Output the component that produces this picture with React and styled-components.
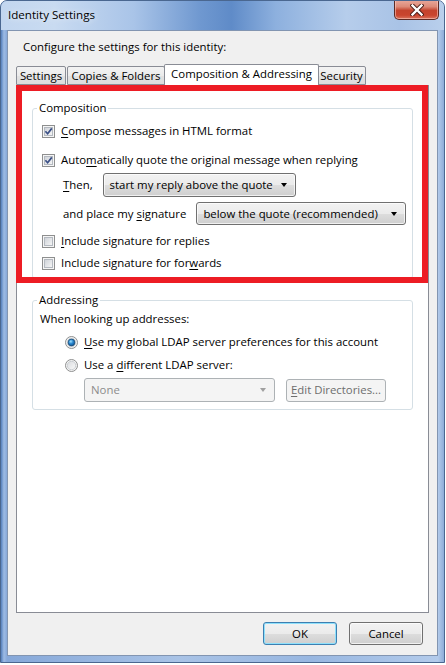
import React from 'react';
import styled, { createGlobalStyle } from 'styled-components';

const Global = createGlobalStyle`
  html, body { margin: 0; padding: 0; background: #ffffff; }
  body {
    font-family: "Open Sans", "Noto Sans", sans-serif;
    font-size: 11.4px;
    color: #000;
  }
  * { box-sizing: border-box; }
`;

const Window = styled.div`
  width: 445px;
  height: 663px;
  border: 1px solid #4a6790;
  border-radius: 7px 7px 0 0;
  background: linear-gradient(90deg, #5580bd 0px, #9dbbe4 3px, #86a8d9 6px, #a9c3e6 40%, #98b7e1 70%, #b3cbeb calc(100% - 6px), #8eacd8 100%);
  display: flex;
  flex-direction: column;
  padding: 0 6px 6px 6px;
  overflow: hidden;
`;

const TitleBar = styled.div`
  height: 29px;
  margin: 0 -6px;
  padding: 0 5px 0 7px;
  display: flex;
  justify-content: space-between;
  align-items: flex-start;
  background: linear-gradient(90deg, #c2d6ef 0%, #c9dbf1 12%, #a9c4e8 30%, #6f98d0 45%, #5f8bc8 52%, #8db0de 62%, #b6cdeb 78%, #a9c3e6 90%, #b9cfec 100%);
`;

const Title = styled.div`
  margin-top: 6px;
  line-height: 16px;
  font-size: 11.6px;
  color: #000;
  text-shadow: 0 0 6px rgba(255,255,255,0.9);
`;

const CloseButton = styled.div`
  width: 45px;
  height: 20px;
  margin-top: -1px;
  border: 1px solid #5c2a24;
  border-top: none;
  border-radius: 0 0 5px 5px;
  background: linear-gradient(180deg, #e9a99c 0%, #dd8a78 35%, #c4432d 55%, #c9452e 80%, #d9735d 100%);
  box-shadow: inset 0 0 0 1px rgba(255,210,200,0.55);
  display: flex;
  align-items: center;
  justify-content: center;
`;

const Client = styled.div`
  flex: 1;
  border: 1px solid #8295b1;
  background: #f0f0f0;
  display: flex;
  flex-direction: column;
  padding: 8px 8px 10px 8px;
`;

const Intro = styled.div`
  line-height: 16px;
  padding-left: 7px;
`;

const TabStrip = styled.div`
  margin-top: 9px;
  height: 21px;
  display: flex;
  align-items: flex-end;
  position: relative;
  z-index: 1;
`;

const Tab = styled.div`
  width: ${p => p.$w}px;
  height: ${p => (p.$active ? 22 : 19)}px;
  margin-left: ${p => (p.$active ? -2 : 0)}px;
  margin-right: ${p => (p.$active ? -2 : 1)}px;
  margin-bottom: ${p => (p.$active ? -1 : 0)}px;
  border: 1px solid #898c95;
  border-bottom: ${p => (p.$active ? 'none' : '1px solid #898c95')};
  border-radius: 2px 2px 0 0;
  background: ${p => (p.$active ? '#ffffff' : 'linear-gradient(180deg, #f3f3f3 0%, #ebebeb 50%, #e2e2e2 51%, #dcdcdc 100%)')};
  display: flex;
  justify-content: center;
  padding-top: 1px;
  line-height: 16px;
  white-space: nowrap;
  position: relative;
  z-index: ${p => (p.$active ? 2 : 1)};
`;

const Panel = styled.div`
  flex: 1;
  border: 1px solid #898c95;
  background: #ffffff;
  position: relative;
  padding: 0 15px;
  display: flex;
  flex-direction: column;
`;

const Highlight = styled.div`
  position: absolute;
  left: -1px;
  top: -1px;
  width: 412px;
  height: 198px;
  border: 6px solid #ed1c24;
  pointer-events: none;
  z-index: 3;
`;

const Group = styled.fieldset`
  margin: ${p => p.$top}px 0 0 0;
  padding: 0 8px 7px 7px;
  border: 1px solid #d5dfe5;
  border-radius: 3px;
  min-width: 0;
  display: flex;
  flex-direction: column;
`;

const Legend = styled.legend`
  padding: 0 2px;
  margin-left: -3px;
  line-height: 16px;
`;

const Line = styled.div`
  display: flex;
  align-items: center;
  height: ${p => p.$h || 16}px;
  margin-top: ${p => p.$mt || 0}px;
  margin-left: ${p => p.$ml || 0}px;
  gap: ${p => p.$gap || 6}px;
  white-space: nowrap;
  line-height: 16px;
`;

const Key = styled.span`
  text-decoration: underline;
  text-underline-offset: 2px;
`;

const Icon13 = styled.svg`
  width: 13px;
  height: 13px;
  flex: none;
  display: block;
`;

const Select = styled.div`
  width: ${p => p.$w}px;
  height: ${p => p.$h || 24}px;
  border: 1px solid ${p => (p.$disabled ? '#adb2b5' : '#707070')};
  border-radius: 3px;
  background: ${p => (p.$disabled ? '#f4f4f4' : 'linear-gradient(180deg, #f2f2f2 0%, #ebebeb 50%, #dddddd 51%, #cfcfcf 100%)')};
  box-shadow: ${p => (p.$disabled ? 'none' : 'inset 0 0 0 1px rgba(255,255,255,0.7)')};
  color: ${p => (p.$disabled ? '#8c8c8c' : '#000')};
  display: flex;
  align-items: center;
  justify-content: space-between;
  padding: 0 8px 0 6px;
  flex: none;
`;

const Arrow = styled.span`
  width: 0;
  height: 0;
  border-left: 3.5px solid transparent;
  border-right: 3.5px solid transparent;
  border-top: 4px solid ${p => (p.$disabled ? '#a0a0a0' : '#000')};
`;

const Button = styled.div`
  width: ${p => p.$w}px;
  height: 23px;
  border: 1px solid ${p => (p.$default ? '#3c7fb1' : p.$disabled ? '#adb2b5' : '#707070')};
  border-radius: 3px;
  background: ${p => (p.$disabled ? '#f4f4f4' : 'linear-gradient(180deg, #f2f2f2 0%, #ebebeb 50%, #dddddd 51%, #cfcfcf 100%)')};
  box-shadow: ${p => (p.$default ? 'inset 0 0 0 1px #8ee0fb' : p.$disabled ? 'none' : 'inset 0 0 0 1px rgba(255,255,255,0.7)')};
  color: ${p => (p.$disabled ? '#6d6d6d' : '#000')};
  display: flex;
  align-items: center;
  justify-content: center;
  line-height: 16px;
  flex: none;
`;

const ButtonRow = styled.div`
  margin-top: 9px;
  display: flex;
  justify-content: flex-end;
  gap: 12px;
  padding-right: 6px;
`;

const CheckBox = ({ checked }) => (
  <Icon13 viewBox="0 0 13 13">
    <defs>
      <linearGradient id="cbfill" x1="0" y1="0" x2="1" y2="1">
        <stop offset="0" stopColor="#cdd1d7" />
        <stop offset="1" stopColor="#f7f7f7" />
      </linearGradient>
    </defs>
    <rect x="0.5" y="0.5" width="12" height="12" fill="#f5f5f5" stroke="#8e8f8f" />
    <rect x="2.5" y="2.5" width="8" height="8" fill="url(#cbfill)" stroke="#b4b9c0" />
    {checked && (
      <path d="M3.4 6.3 L5.6 8.7 L9.8 3.4" fill="none" stroke="#3a4f86" strokeWidth="1.7" />
    )}
  </Icon13>
);

const Radio = ({ checked }) => (
  <Icon13 viewBox="0 0 13 13">
    <defs>
      <linearGradient id="rbout" x1="0" y1="0" x2="1" y2="1">
        <stop offset="0" stopColor="#d9dbde" />
        <stop offset="1" stopColor="#fafafa" />
      </linearGradient>
      <radialGradient id="rbdot" cx="0.4" cy="0.35" r="0.7">
        <stop offset="0" stopColor="#9fe2ff" />
        <stop offset="0.45" stopColor="#2d8ad1" />
        <stop offset="1" stopColor="#0b4f8f" />
      </radialGradient>
    </defs>
    <circle cx="6.5" cy="6.5" r="6" fill="#f3f3f3" stroke="#8e8f8f" />
    <circle cx="6.5" cy="6.5" r="4.2" fill="url(#rbout)" stroke="#c2c6cb" strokeWidth="0.8" />
    {checked && <circle cx="6.5" cy="6.5" r="3.4" fill="url(#rbdot)" stroke="#16456f" strokeWidth="0.7" />}
  </Icon13>
);

const CloseGlyph = () => (
  <svg width="14" height="12" viewBox="0 0 14 12">
    <path d="M2.5 1.5 L11.5 10.5 M11.5 1.5 L2.5 10.5" stroke="#4a1c16" strokeWidth="4.2" strokeLinecap="square" />
    <path d="M2.5 1.5 L11.5 10.5 M11.5 1.5 L2.5 10.5" stroke="#ffffff" strokeWidth="2.4" strokeLinecap="square" />
  </svg>
);

const tabs = [
  { label: 'Settings', w: 50 },
  { label: 'Copies & Folders', w: 98 },
  { label: 'Composition & Addressing', w: 155, active: true },
  { label: 'Security', w: 49 },
];

export default function App() {
  return (
    <>
      <Global />
      <Window>
        <TitleBar>
          <Title>Identity Settings</Title>
          <CloseButton><CloseGlyph /></CloseButton>
        </TitleBar>
        <Client>
          <Intro>Configure the settings for this identity:</Intro>
          <TabStrip>
            {tabs.map(t => (
              <Tab key={t.label} $w={t.w} $active={t.active}>{t.label}</Tab>
            ))}
          </TabStrip>
          <Panel>
            <Highlight />
            <Group $top={14}>
              <Legend>Composition</Legend>
              <Line $mt={7} $ml={2}>
                <CheckBox checked />
                <span><Key>C</Key>ompose messages in HTML format</span>
              </Line>
              <Line $mt={13} $ml={2}>
                <CheckBox checked />
                <span>Auto<Key>m</Key>atically quote the original message when replying</span>
              </Line>
              <Line $mt={5} $ml={23} $h={24} $gap={10}>
                <span><Key>T</Key>hen,</span>
                <Select $w={193}>start my reply above the quote<Arrow /></Select>
              </Line>
              <Line $mt={5} $ml={23} $h={23} $gap={10}>
                <span>and place my <Key>s</Key>ignature</span>
                <Select $w={210} $h={23}>below the quote (recommended)<Arrow /></Select>
              </Line>
              <Line $mt={8} $ml={2}>
                <CheckBox />
                <span><Key>I</Key>nclude signature for replies</span>
              </Line>
              <Line $mt={6} $ml={2}>
                <CheckBox />
                <span>Include signature for for<Key>w</Key>ards</span>
              </Line>
            </Group>
            <Group $top={13}>
              <Legend>Addressing</Legend>
              <Line $mt={3}>When looking up addresses:</Line>
              <Line $mt={7} $ml={25}>
                <Radio checked />
                <span><Key>U</Key>se my global LDAP server preferences for this account</span>
              </Line>
              <Line $mt={7} $ml={25}>
                <Radio />
                <span>Use a <Key>d</Key>ifferent LDAP server:</span>
              </Line>
              <Line $mt={5} $ml={44} $h={24} $gap={11}>
                <Select $w={191} $disabled>None<Arrow $disabled /></Select>
                <Button $w={100} $disabled><span><Key>E</Key>dit Directories...</span></Button>
              </Line>
            </Group>
          </Panel>
          <ButtonRow>
            <Button $w={74} $default>OK</Button>
            <Button $w={74}>Cancel</Button>
          </ButtonRow>
        </Client>
      </Window>
    </>
  );
}
